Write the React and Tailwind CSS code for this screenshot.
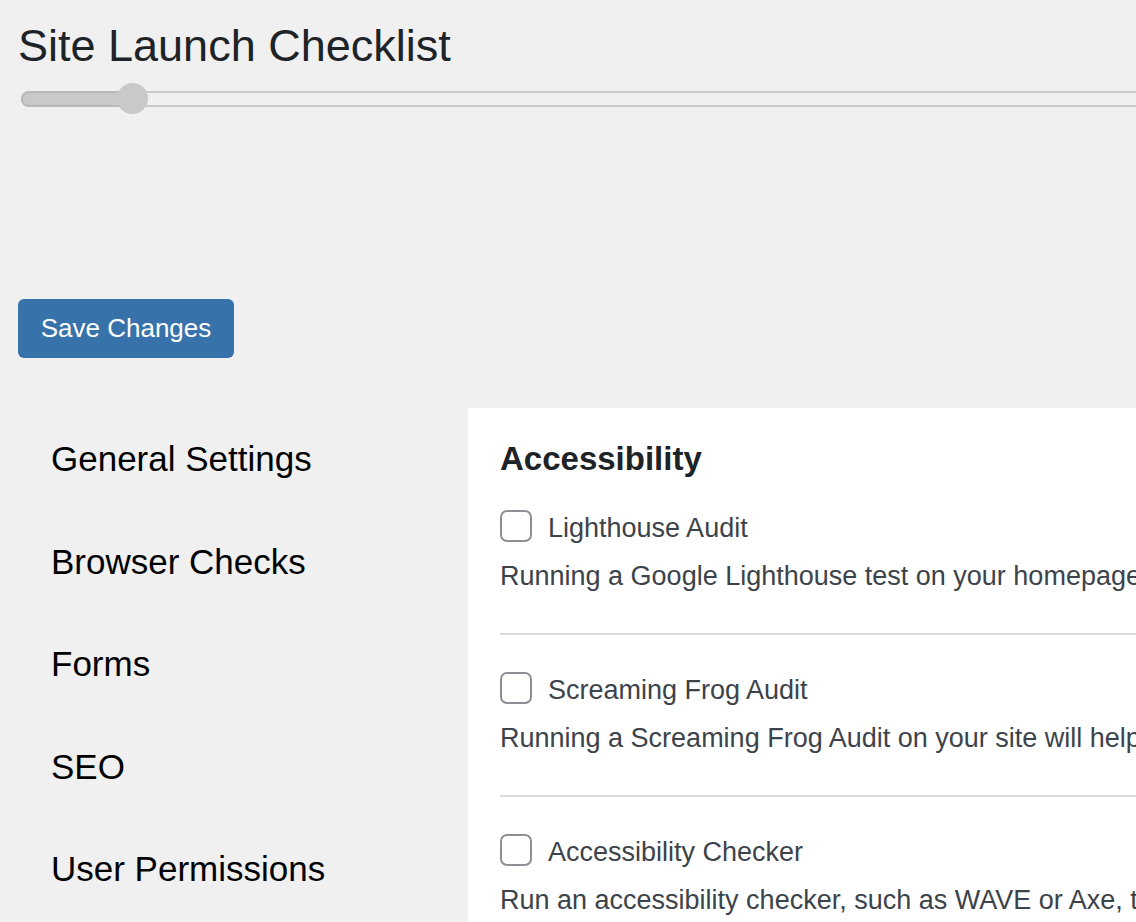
// App.jsx — Site Launch Checklist settings page (WP-admin style, zoomed)

const NAV = ['General Settings', 'Browser Checks', 'Forms', 'SEO', 'User Permissions'];

const ITEMS = [
  {
    id: 'lighthouse',
    label: 'Lighthouse Audit',
    desc: 'Running a Google Lighthouse test on your homepage will highlight performance and accessibility issues.',
  },
  {
    id: 'screaming-frog',
    label: 'Screaming Frog Audit',
    desc: 'Running a Screaming Frog Audit on your site will help you find broken links and missing alt text.',
  },
  {
    id: 'a11y-checker',
    label: 'Accessibility Checker',
    desc: 'Run an accessibility checker, such as WAVE or Axe, to catch contrast and labelling problems.',
  },
];

// ─────────────────────────────────────────────────────────────────────────────
// Progress slider — track, filled part and round thumb
// ─────────────────────────────────────────────────────────────────────────────
function ProgressSlider() {
  return (
    <div className="relative ml-[21px] mt-[11px] h-[32px] w-[1400px]">
      <div className="relative mt-[8px] h-[16px] w-full">
        <div className="h-full w-full rounded-full border-2 border-[#c9c9c9] bg-[#f0f0f0]" />
        <div className="absolute left-0 top-0 h-[16px] w-[112px] rounded-l-full border-2 border-r-0 border-[#b9b9b9] bg-[#c9c9c9]" />
      </div>
      {/* thumb sits over the track */}
      <div className="absolute left-[96px] top-0 h-[31px] w-[31px] rounded-full bg-[#c9c9c9]" />
    </div>
  );
}

function CheckItem({ item, first, last }) {
  const cls = [
    first ? '' : 'pt-[37px]',
    last ? '' : 'border-b-2 border-[#dcdcde] pb-[37px]',
  ].join(' ');

  return (
    <div className={cls}>
      <label className="flex h-[32px] items-start">
        <span className="h-[32px] w-[32px] shrink-0 rounded-[7px] border-2 border-[#8c8f94] bg-white" />
        <span className="ml-[16px] mt-[2px] text-[27px] leading-[32px] text-[#3c434a] whitespace-nowrap">
          {item.label}
        </span>
      </label>
      <p className="mt-[14px] text-[27px] leading-[40px] text-[#3c434a] whitespace-nowrap">{item.desc}</p>
    </div>
  );
}

export default function App() {
  return (
    <div
      className="flex h-[922px] w-full flex-col overflow-hidden bg-[#f0f0f1]"
      style={{ fontFamily: '"Liberation Sans", Arial, sans-serif' }}
    >
      {/* Header */}
      <h1 className="pl-[18px] pt-[20px] text-[45px] font-normal leading-[52px] text-[#1d2327] whitespace-nowrap">
        Site Launch Checklist
      </h1>
      <ProgressSlider />

      <div className="ml-[18px] mt-[184px]">
        <button
          type="button"
          className="h-[59px] w-[216px] rounded-[6px] bg-[#3872ab] text-[26px] text-white"
        >
          Save Changes
        </button>
      </div>

      {/* Body — side nav + panel */}
      <div className="mt-[50px] flex flex-1">
        <nav className="w-[468px] shrink-0">
          {NAV.map((name) => (
            <div key={name} className="h-[102.5px] pl-[51px] text-[35px] leading-[102.5px] text-black whitespace-nowrap">
              {name}
            </div>
          ))}
        </nav>

        <section className="min-w-0 flex-1 overflow-hidden bg-white pl-[32px] pt-[31px]">
          <h2 className="text-[33px] font-bold leading-[40px] text-[#1d2327]">Accessibility</h2>
          <div className="mt-[31px]">
            {ITEMS.map((item, i) => (
              <CheckItem key={item.id} item={item} first={i === 0} last={i === ITEMS.length - 1} />
            ))}
          </div>
        </section>
      </div>
    </div>
  );
}
